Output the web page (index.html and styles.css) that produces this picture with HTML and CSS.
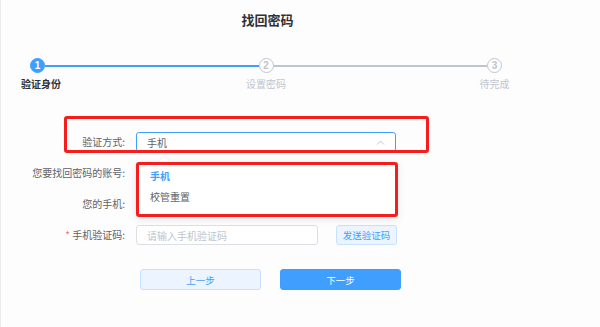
FILE: index.html
```html
<!DOCTYPE html>
<html lang="zh-CN">
<head>
  <meta charset="UTF-8">
  <meta name="viewport" content="width=device-width, initial-scale=1.0">
  <title>找回密码</title>
  <link rel="stylesheet" href="styles.css">
</head>
<body>
  <div class="page">
    <h1 class="title">找回密码</h1>

    <div class="steps">
      <div class="step-track">
        <span class="dot active">1</span>
        <span class="line active"></span>
        <span class="dot">2</span>
        <span class="line"></span>
        <span class="dot">3</span>
      </div>
      <div class="step-labels">
        <span class="label active"><span>验证身份</span></span>
        <span class="gap"></span>
        <span class="label"><span>设置密码</span></span>
        <span class="gap"></span>
        <span class="label"><span>待完成</span></span>
      </div>
    </div>

    <div class="form">
      <label class="form-label">验证方式:</label>
      <div class="select-wrap">
        <div class="select">
          <span>手机</span>
          <svg class="arrow" width="9" height="5" viewBox="0 0 9 5"><path d="M1 4.5 L4.5 1 L8 4.5" fill="none" stroke="#c0c4cc" stroke-width="1"/></svg>
        </div>
        <div class="dropdown">
          <span class="caret"></span>
          <div class="option selected">手机</div>
          <div class="option">校管重置</div>
        </div>
      </div>

      <label class="form-label">您要找回密码的账号:</label>
      <div class="value"></div>

      <label class="form-label">您的手机:</label>
      <div class="value"></div>

      <label class="form-label"><i class="star">*</i> 手机验证码:</label>
      <div class="code-row">
        <input class="input" type="text" placeholder="请输入手机验证码">
        <button class="btn btn-plain btn-send">发送验证码</button>
      </div>
    </div>

    <div class="actions">
      <button class="btn btn-plain btn-wide">上一步</button>
      <button class="btn btn-primary btn-wide">下一步</button>
    </div>
  </div>

  <div class="mark mark-select"></div>
  <div class="mark mark-menu"></div>
</body>
</html>
```

FILE: styles.css
```css
body {
  margin: 0;
  width: 600px;
  height: 327px;
  overflow: hidden;
  background: #fdfdfe;
  font-family: "Noto Sans CJK SC", "Noto Sans", sans-serif;
  font-size: 10px;
  color: #606266;
  position: relative;
}

.page {
  box-sizing: border-box;
  height: 327px;
  border-left: 1px solid #ececec;
  padding-top: 10px;
}

.title {
  width: 533px;
  margin: 0;
  text-align: center;
  font-size: 13px;
  line-height: 20px;
  font-weight: bold;
  color: #303133;
}

.steps {
  margin: 28px 0 0 29px;
  width: 472px;
}

.step-track {
  display: flex;
  align-items: center;
  height: 15px;
}

.dot {
  box-sizing: border-box;
  width: 15px;
  height: 15px;
  border-radius: 50%;
  border: 1.5px solid #c0c4cc;
  color: #c0c4cc;
  background: #fff;
  font-size: 10px;
  font-weight: bold;
  display: flex;
  align-items: center;
  justify-content: center;
  font-family: "Liberation Sans", sans-serif;
}

.dot.active {
  border-color: #409eff;
  background: #409eff;
  color: #fff;
}

.line {
  flex: 1;
  height: 2px;
  background: #c0c4cc;
}

.line.active {
  background: #409eff;
}

.step-labels {
  display: flex;
  margin-top: 4px;
  line-height: 14px;
}

.step-labels .label {
  width: 15px;
  display: flex;
  justify-content: center;
  white-space: nowrap;
  color: #c0c4cc;
}

.step-labels .label.active {
  color: #303133;
  font-weight: bold;
  padding-left: 7px;
  box-sizing: border-box;
}

.step-labels .gap {
  flex: 1;
}

.form {
  margin-top: 41px;
  display: grid;
  grid-template-columns: 124px 1fr;
  column-gap: 11px;
  row-gap: 11px;
  grid-auto-rows: 20px;
}

.form-label {
  text-align: right;
  line-height: 20px;
  color: #606266;
  white-space: nowrap;
}

.star {
  font-style: normal;
  color: #f56c6c;
}

.select-wrap {
  position: relative;
  width: 260px;
}

.select {
  box-sizing: border-box;
  height: 20px;
  border: 1px solid #409eff;
  border-radius: 3px;
  background: #fff;
  padding: 0 10px;
  display: flex;
  align-items: center;
  justify-content: space-between;
}

.dropdown {
  position: absolute;
  top: 30px;
  left: 0;
  width: 262px;
  height: 55px;
  box-sizing: border-box;
  padding-top: 3px;
  background: #fff;
  border-radius: 3px;
  box-shadow: 0 2px 8px rgba(0, 0, 0, 0.1);
  z-index: 2;
}

.caret {
  position: absolute;
  top: -4px;
  left: 25px;
  width: 7px;
  height: 7px;
  background: #fff;
  transform: rotate(45deg);
  box-shadow: -1px -1px 2px rgba(0, 0, 0, 0.05);
}

.option {
  height: 21px;
  line-height: 21px;
  padding-left: 14px;
  position: relative;
}

.option.selected {
  color: #409eff;
  font-weight: bold;
}

.code-row {
  display: flex;
  gap: 18px;
}

.input {
  box-sizing: border-box;
  width: 182px;
  height: 20px;
  border: 1px solid #dcdfe6;
  border-radius: 3px;
  padding: 0 10px;
  font: inherit;
  color: #606266;
  background: #fff;
  outline: none;
}

.input::placeholder {
  color: #c0c4cc;
}

.btn {
  box-sizing: border-box;
  height: 20px;
  border-radius: 3px;
  font-family: inherit;
  font-size: 9.5px;
  padding: 0;
  cursor: pointer;
}

.btn-plain {
  background: #ecf5ff;
  border: 1px solid #c6e2ff;
  color: #409eff;
}

.btn-primary {
  background: #409eff;
  border: 1px solid #409eff;
  color: #fff;
}

.btn-send {
  width: 61px;
}

.actions {
  display: flex;
  gap: 19px;
  margin: 24px 0 0 139px;
}

.btn-wide {
  width: 121px;
  height: 21px;
}

.mark {
  position: absolute;
  box-sizing: border-box;
  border: 3px solid #f61d1d;
  border-radius: 3px;
  z-index: 5;
}

.mark-select {
  left: 64px;
  top: 116px;
  width: 365px;
  height: 37px;
}

.mark-menu {
  left: 136px;
  top: 162px;
  width: 262px;
  height: 55px;
}
```
